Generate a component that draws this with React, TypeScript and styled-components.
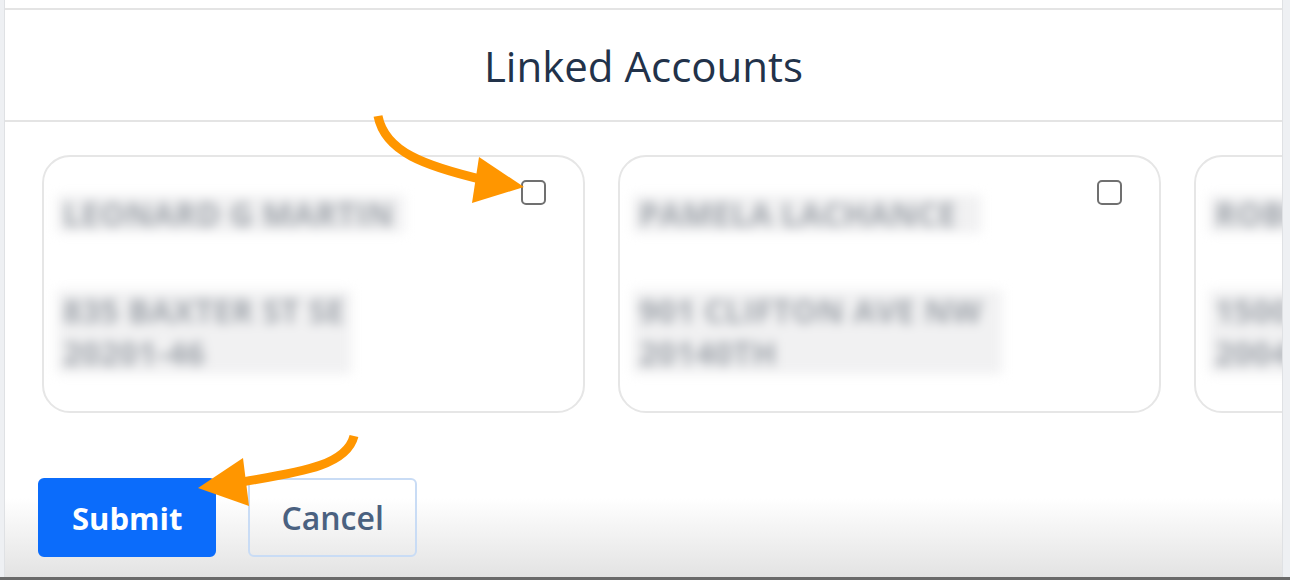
import * as React from 'react'
import styled, { createGlobalStyle } from 'styled-components'

const GlobalStyle = createGlobalStyle`
  html, body {
    margin: 0;
    padding: 0;
    background: #eef0f3;
  }
  body {
    font-family: "Open Sans", "Noto Sans", sans-serif;
  }
`

const Page = styled.div`
  position: relative;
  width: 1290px;
  height: 580px;
  overflow: hidden;
  background: #eef0f3;
  padding-left: 4px;
  box-sizing: border-box;
`

const Panel = styled.div`
  width: 1279px;
  height: 577px;
  background: #fff;
  border-left: 1px solid #dfe1e4;
  border-right: 1px solid #dfe1e4;
  box-sizing: border-box;
  display: flex;
  flex-direction: column;
  overflow: hidden;
`

const TopStrip = styled.div`
  height: 8px;
  border-bottom: 2px solid #e4e4e4;
`

const Header = styled.div`
  height: 110px;
  display: flex;
  align-items: center;
  justify-content: center;
  border-bottom: 2px solid #e4e4e4;
`

const Title = styled.h1`
  margin: 0;
  font-size: 42px;
  font-weight: 400;
  color: #22324a;
`

const Body = styled.div`
  flex: 1;
  display: flex;
  flex-direction: column;
  padding-top: 33px;
`

const CardRow = styled.div`
  display: flex;
  gap: 33px;
  padding-left: 37px;
`

const Card = styled.div`
  flex-shrink: 0;
  width: 543px;
  height: 258px;
  box-sizing: border-box;
  border: 2px solid #e6e6e6;
  border-radius: 28px;
  padding: 23px 37px 0 13px;
  display: flex;
  flex-direction: column;
`

const CardTop = styled.div`
  display: flex;
  justify-content: space-between;
  align-items: flex-start;
`

const Blurred = styled.div<{ $pad: number }>`
  align-self: flex-start;
  font-size: 32px;
  font-weight: 700;
  letter-spacing: 0.5px;
  color: #9fa4ab;
  filter: blur(5.5px);
  white-space: nowrap;
  background: #f1f1f2;
  padding: 0 ${p => p.$pad}px 0 6px;
`

const Name = styled(Blurred)`
  margin-top: 15px;
  line-height: 38px;
`

const Address = styled(Blurred)`
  margin-top: 57px;
  line-height: 42px;
`

const Checkbox = styled.span`
  width: 25px;
  height: 25px;
  box-sizing: border-box;
  border: 2px solid #707070;
  border-radius: 5px;
  flex-shrink: 0;
`

const Footer = styled.div`
  margin-top: 65px;
  flex: 1;
  display: flex;
  align-items: flex-start;
  gap: 32px;
  padding-left: 33px;
  background: linear-gradient(to bottom, #ffffff 0px, #ffffff 20px, #e3e3e3 100%);
`

const Button = styled.button<{ $primary?: boolean }>`
  height: 79px;
  padding: 0 ${p => p.$primary ? 32 : 31}px;
  border-radius: 6px;
  font-family: "Open Sans", sans-serif;
  font-size: ${p => p.$primary ? 31 : 32}px;
  font-weight: ${p => p.$primary ? 700 : 600};
  background: ${p => p.$primary ? '#0b6cfb' : 'transparent'};
  color: ${p => p.$primary ? '#ffffff' : '#4a6180'};
  border: 2px solid ${p => p.$primary ? '#0b6cfb' : '#c9dcf5'};
  cursor: pointer;
`

const BottomLine = styled.div`
  position: absolute;
  left: 0;
  right: 0;
  bottom: 0;
  height: 3px;
  background: #6a6a6a;
`

const Annotation = styled.svg`
  position: absolute;
  left: 0;
  top: 0;
  pointer-events: none;
`

interface Account {
    name: string
    namePad: number
    street: string
    city: string
    addrPad: number
}

const accounts: Account[] = [
    { name: 'LEONARD G MARTIN', namePad: 10, street: '835 BAXTER ST SE', city: '20201-46', addrPad: 6 },
    { name: 'PAMELA LACHANCE', namePad: 24, street: '901 CLIFTON AVE NW', city: '20140TH', addrPad: 20 },
    { name: 'ROBERT A WILLIAMS', namePad: 10, street: '1500 OAK ST NE', city: '2004-NA', addrPad: 30 },
]

const AccountCard = ({ account }: { account: Account }) => (
    <Card>
        <CardTop>
            <Name $pad={ account.namePad }>{ account.name }</Name>
            <Checkbox/>
        </CardTop>
        <Address $pad={ account.addrPad }>
            { account.street }<br/>{ account.city }
        </Address>
    </Card>
)

export default function App() {
    return (
        <Page>
            <GlobalStyle/>
            <Panel>
                <TopStrip/>
                <Header>
                    <Title>Linked Accounts</Title>
                </Header>
                <Body>
                    <CardRow>
                        { accounts.map(a => <AccountCard key={ a.name } account={ a }/>) }
                    </CardRow>
                    <Footer>
                        <Button $primary>Submit</Button>
                        <Button>Cancel</Button>
                    </Footer>
                </Body>
            </Panel>
            <BottomLine/>
            <Annotation width="1290" height="580" viewBox="0 0 1290 580">
                <path d="M378 116 C 385 152, 425 166, 484 180" fill="none" stroke="#ff9600" strokeWidth="9"/>
                <polygon points="479,157 524,187 472,203" fill="#ff9600"/>
                <path d="M354 436 C 346 468, 292 473, 236 483" fill="none" stroke="#ff9600" strokeWidth="9"/>
                <polygon points="243,458 198,488 249,506" fill="#ff9600"/>
            </Annotation>
        </Page>
    )
}
